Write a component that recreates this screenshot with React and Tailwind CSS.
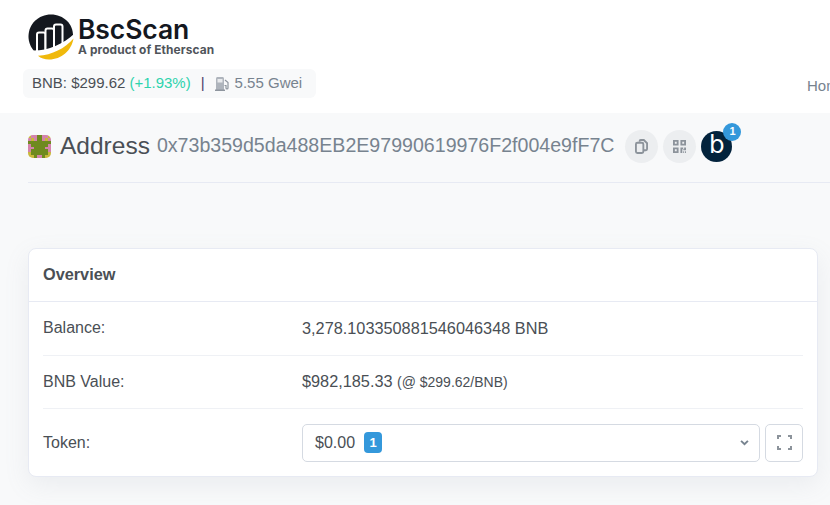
import React from 'react';

const sans = { fontFamily: '"Liberation Sans", Arial, sans-serif' };

const Logo = () => (
  <svg width="46" height="46" viewBox="0 0 46 46">
    <path d="M23 0.500C10.500 0.500 0.500 10 0.500 22.500c0 6 2.500 11.500 6.500 15.500 14-2 28-7 38-15.500C45.500 10 35.500 0.500 23 0.500Z" fill="#14181f" />
    <path d="M9 38V20.500a2 2 0 0 1 2-2h4.500a2 2 0 0 1 2 2V38" fill="#14181f" stroke="#fff" strokeWidth="2" />
    <path d="M17.500 38V16.500a2 2 0 0 1 2-2H24a2 2 0 0 1 2 2V34" fill="#14181f" stroke="#fff" strokeWidth="2" />
    <path d="M26 34V12.500a2 2 0 0 1 2-2h4.500a2 2 0 0 1 2 2V30" fill="#14181f" stroke="#fff" strokeWidth="2" />
    <path d="M3 36.500c15 1 32-6 43-16.500V46H3Z" fill="#fff" />
    <path d="M45.500 24.500C43.500 36.500 33.500 45.500 21 45.500c-4.500 0-8-1.200-11-3.700C24 41 37 34.500 45.500 24.500Z" fill="#f0b90b" />
  </svg>
);

const identRows = ['yppggppy', 'pypggpyp', 'gggggggg', 'pggggggp', 'ppggggpp', 'pggggggp', 'yggggggy', 'yygppgyy'];
const identColors = { y: '#c9b83c', p: '#d484ab', g: '#6f8a1f' };

const Identicon = () => (
  <svg width="23" height="23" viewBox="0 0 8 8" className="rounded-[5px]" shapeRendering="crispEdges">
    {identRows.map((row, y) =>
      row.split('').map((c, x) => (
        <rect key={`${x}-${y}`} x={x} y={y} width="1" height="1" fill={identColors[c]} />
      ))
    )}
  </svg>
);

const Row = ({ label, children, last }) => (
  <div className={`flex items-center mx-[14px] text-[16px] text-[#4a4f55] ${last ? 'h-[68px] pb-[1px]' : 'h-[53.500px] border-b border-[#eff1f5]'}`}>
    <div className="w-[259px] shrink-0">{label}</div>
    <div className="flex-1 min-w-0">{children}</div>
  </div>
);

export default function App() {
  return (
    <div style={sans} className="w-[830px] h-[505px] overflow-hidden bg-[#f8f9fa] flex flex-col">
      {/* header */}
      <header className="h-[113px] shrink-0 bg-white flex justify-between pl-[23px] pt-[14px]">
        <div className="flex flex-col items-start">
          <div className="flex items-center gap-[4px] ml-[5px]">
            <Logo />
            <div className="flex flex-col -mt-[3px]">
              <span style={{ fontFamily: 'Inter, sans-serif' }} className="text-[26.500px] leading-[28px] font-semibold text-[#14181f] tracking-[-0.1px]">BscScan</span>
              <span style={{ fontFamily: 'Inter, sans-serif' }} className="text-[11.900px] leading-[13px] font-bold text-[#4f545a] tracking-[0.1px]">A product of Etherscan</span>
            </div>
          </div>
          <div className="mt-[9px] h-[29px] w-[293px] pl-[9px] flex items-center rounded-[6px] bg-[#f8f9fa] text-[15px] text-[#4a4f55]">
            <span>BNB: $299.62</span>
            <span className="ml-[4px] text-[#2ed3ad]">(+1.93%)</span>
            <span className="ml-[10px] text-[#4a3b6b]">|</span>
            <svg className="ml-[10px]" width="15" height="16" viewBox="0 0 15 16">
              <path d="M1 2.500C1 1.700 1.700 1 2.500 1h5C8.300 1 9 1.700 9 2.500V14H1Z" fill="#aeb4bc" />
              <path d="M2.500 3h5v3.500h-5Z" fill="#e8eaed" />
              <path d="M0 13.500h10V15H0Z" fill="#8e959e" />
              <path d="M10 4l3 2.500v5.500c0 1.200-2 1.200-2 0V9.500H9.500" fill="none" stroke="#8e959e" strokeWidth="1.200" />
            </svg>
            <span className="ml-[5px] text-[#77838f]">5.55 Gwei</span>
          </div>
        </div>
        <div className="self-start mt-[61px] w-[23px] overflow-hidden whitespace-nowrap text-[15px] text-[#77838f]">Home</div>
      </header>

      {/* address title */}
      <div className="ml-[28px] h-[70px] shrink-0 border-b border-[#e7eaf3] flex items-center pb-[3px]">
        <Identicon />
        <span className="ml-[9px] text-[24.500px] text-[#4a4f55]">Address</span>
        <span className="ml-[7px] text-[19.600px] text-[#77838f] whitespace-nowrap">0x73b359d5da488EB2E97990619976F2f004e9fF7C</span>
        <button className="ml-[11px] w-[33px] h-[33px] shrink-0 rounded-full bg-[#eceef0] flex items-center justify-center">
          <svg width="13" height="15" viewBox="0 0 14 16" fill="none" stroke="#8c939b" strokeWidth="2">
            <rect x="1" y="4" width="8" height="11" rx="1.500" fill="#eceef0" />
            <path d="M5 3V2.200C5 1.500 5.500 1 6.200 1h3.300L13 4.500v6.300c0 .7-.5 1.200-1.200 1.200H9.500" />
          </svg>
        </button>
        <button className="ml-[5px] w-[33px] h-[33px] shrink-0 rounded-full bg-[#eceef0] flex items-center justify-center">
          <svg width="13" height="13" viewBox="0 0 14 14" fill="#8c939b">
            <path d="M0 0h6v6H0zM2 2v2h2V2zM8 0h6v6H8zM10 2v2h2V2zM0 8h6v6H0zM2 10v2h2v-2zM8 8h3v2h1V8h2v3h-3v-1h-1v4H8zM11 12h1v2h-1zM13 12h1v2h-1z" fillRule="evenodd" />
          </svg>
        </button>
        <div className="relative ml-[5px] w-[31px] h-[31px] shrink-0 rounded-full bg-[#03233c] flex items-center justify-center">
          <span style={{ fontFamily: 'Inter, sans-serif' }} className="text-white text-[25px] leading-none -mt-[4px]">b</span>
          <span className="absolute -top-[8px] -right-[9px] w-[18px] h-[18px] rounded-full bg-[#3498db] text-white text-[11px] font-bold flex items-center justify-center">1</span>
        </div>
      </div>

      {/* overview card */}
      <div className="mt-[65px] ml-[28px] w-[790px] h-[229px] shrink-0 bg-white border border-[#e7eaf3] rounded-[8px] shadow-[0_8px_24px_rgba(140,152,164,0.12)]">
        <div className="h-[53px] px-[14px] pb-[2px] flex items-center border-b border-[#e7eaf3] text-[16.300px] font-bold text-[#4a4f55]">Overview</div>
        <Row label="Balance:"><span className="text-[16.300px]">3,278.103350881546046348 BNB</span></Row>
        <Row label="BNB Value:"><span className="text-[16.300px]">$982,185.33</span> <span className="text-[14px]">(@ $299.62/BNB)</span></Row>
        <Row label="Token:" last>
          <div className="flex gap-[5px]">
            <div className="flex-1 h-[38px] pl-[12px] pr-[10px] rounded-[5px] border border-[#d5dae2] flex items-center">
              <span>$0.00</span>
              <span className="ml-[9px] w-[18px] h-[21px] rounded-[4px] bg-[#3498db] text-white text-[13px] font-bold flex items-center justify-center">1</span>
              <svg className="ml-auto" width="9" height="6" viewBox="0 0 10 7" fill="none" stroke="#77838f" strokeWidth="2.200">
                <path d="M1 1l4 4 4-4" />
              </svg>
            </div>
            <button className="w-[38px] h-[38px] shrink-0 rounded-[5px] border border-[#d5dae2] flex items-center justify-center">
              <svg width="15" height="15" viewBox="0 0 15 15" fill="none" stroke="#8c939b" strokeWidth="2">
                <path d="M1 4V1h3M11 1h3v3M14 11v3h-3M4 14H1v-3" />
              </svg>
            </button>
          </div>
        </Row>
      </div>
    </div>
  );
}
